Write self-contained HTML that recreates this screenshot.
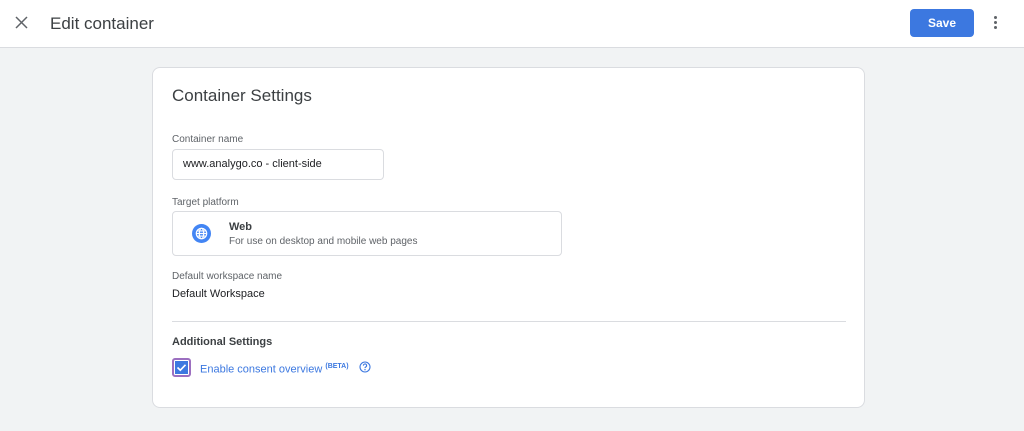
<!DOCTYPE html><html><head><style>
body{margin:0;width:1024px;height:431px;background:#f1f3f4;font-family:"Liberation Sans",sans-serif;position:relative;overflow:hidden;color:#202124}
*{box-sizing:border-box}
.hdr{position:absolute;left:0;top:0;width:1024px;height:48px;background:#fff;border-bottom:1px solid #dadce0}
.a{position:absolute}
.card{position:absolute;left:152px;top:67px;width:713px;height:341px;background:#fff;border:1px solid #dadce0;border-radius:8px}
.lbl{font-size:10px;color:#5f6368}
</style></head><body>
<div class="hdr">
<svg class="a" style="left:15px;top:16px" width="13" height="13" viewBox="0 0 13 13"><path d="M1 1L12 12M12 1L1 12" stroke="#5f6368" stroke-width="1.5"/></svg>
<div class="a" style="left:50px;top:14px;font-size:17px;color:#3c4043">Edit container</div>
<div class="a" style="left:910px;top:9px;width:64px;height:28px;background:#3c78e0;border-radius:4px;color:#fff;font-size:12px;font-weight:bold;text-align:center;line-height:28px">Save</div>
<div class="a" style="left:994px;top:16px;width:3px;height:3px;background:#5f6368;border-radius:50%;box-shadow:0 5px 0 #5f6368,0 10px 0 #5f6368"></div>
</div>
<div class="card">
<div class="a" style="left:19px;top:18px;font-size:17px;color:#3c4043">Container Settings</div>
<div class="a lbl" style="left:19px;top:66px">Container name</div>
<div class="a" style="left:19px;top:81px;height:31px;border:1px solid #dadce0;border-radius:4px;font-size:11px;line-height:29px;padding-left:10px;width:212px">www.analygo.co - client-side</div>
<div class="a lbl" style="left:19px;top:129px">Target platform</div>
<div class="a" style="left:19px;top:143px;width:390px;height:45px;border:1px solid #dadce0;border-radius:4px">
<svg class="a" style="left:19px;top:12px" width="19" height="19" viewBox="0 0 20 20"><circle cx="10" cy="10" r="10" fill="#4285f4"/><g fill="none" stroke="#fff" stroke-width="1.2"><circle cx="10" cy="10" r="5.5"/><ellipse cx="10" cy="10" rx="2.3" ry="5.5"/><path d="M4.5 10H15.5M5.3 7.3H14.7M5.3 12.7H14.7"/></g></svg>
<div class="a" style="left:56px;top:9px;font-size:11px;font-weight:bold;color:#3c4043">Web</div>
<div class="a" style="left:56px;top:24px;font-size:10px;color:#5f6368">For use on desktop and mobile web pages</div>
</div>
<div class="a lbl" style="left:19px;top:203px">Default workspace name</div>
<div class="a" style="left:19px;top:220px;font-size:11px">Default Workspace</div>
<div class="a" style="left:19px;top:253px;width:674px;height:1px;background:#dadce0"></div>
<div class="a" style="left:19px;top:268px;font-size:11px;font-weight:bold;color:#3c4043">Additional Settings</div>
<div class="a" style="left:19px;top:290px;width:19px;height:19px;border:2px solid #9c6fc0;border-radius:3px;background:#3c78e0;outline:1px solid #fff;outline-offset:-3px"><svg width="15" height="15" viewBox="0 0 15 15"><path d="M3.5 7.5L6.3 10.2L11.5 4.8" stroke="#fff" stroke-width="1.6" fill="none"/></svg></div>
<div class="a" style="left:47px;top:295px;font-size:11px;color:#3c78e0">Enable consent overview <sup style="font-size:7px;font-weight:bold">(BETA)</sup></div>
<svg class="a" style="left:206px;top:293px" width="12" height="12" viewBox="0 0 12 12"><circle cx="6" cy="6" r="5" fill="none" stroke="#3c78e0" stroke-width="1.1"/><path d="M4.4 4.6a1.6 1.6 0 1 1 2.3 1.4c-.5.3-.7.6-.7 1.1" fill="none" stroke="#3c78e0" stroke-width="1.1"/><circle cx="6" cy="8.7" r=".7" fill="#3c78e0"/></svg>
</div>
</body></html>
